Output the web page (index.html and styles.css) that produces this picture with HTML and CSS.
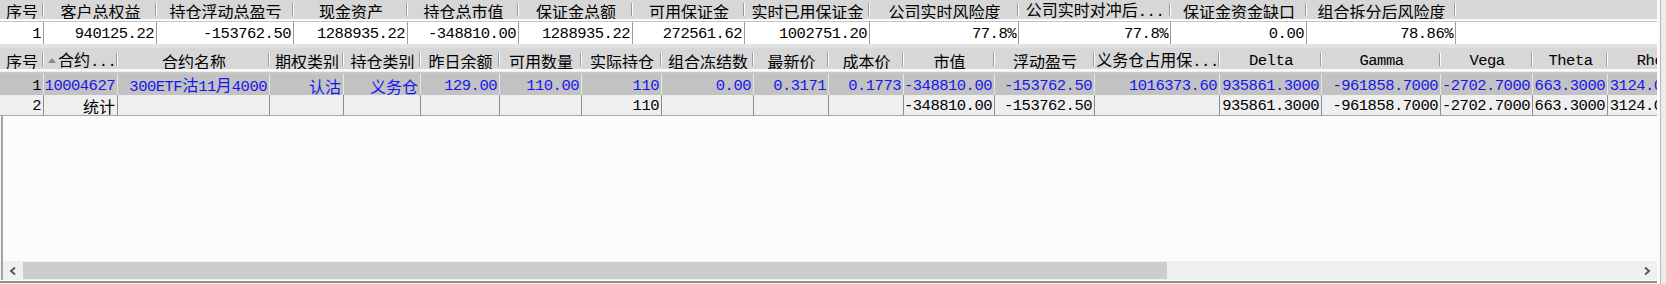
FILE: index.html
```html
<!DOCTYPE html>
<html lang="zh">
<head>
<meta charset="utf-8">
<title>持仓</title>
<link rel="stylesheet" href="styles.css">
</head>
<body>
<div class="screen">
  <div class="main">
    <div class="top-head top-cols">
      <div class="hc zh">序号</div>
      <div class="hc zh">客户总权益</div>
      <div class="hc zh">持仓浮动总盈亏</div>
      <div class="hc zh">现金资产</div>
      <div class="hc zh">持仓总市值</div>
      <div class="hc zh">保证金总额</div>
      <div class="hc zh">可用保证金</div>
      <div class="hc zh">实时已用保证金</div>
      <div class="hc zh">公司实时风险度</div>
      <div class="hc"><span><span class="zh">公司实时对冲后</span>...</span></div>
      <div class="hc zh">保证金资金缺口</div>
      <div class="hc zh">组合拆分后风险度</div>
      <div class="hfill"></div>
    </div>
    <div class="head-line"></div>
    <div class="top-row top-cols">
      <div class="dc">1</div>
      <div class="dc">940125.22</div>
      <div class="dc">-153762.50</div>
      <div class="dc">1288935.22</div>
      <div class="dc">-348810.00</div>
      <div class="dc">1288935.22</div>
      <div class="dc">272561.62</div>
      <div class="dc">1002751.20</div>
      <div class="dc">77.8%</div>
      <div class="dc">77.8%</div>
      <div class="dc">0.00</div>
      <div class="dc">78.86%</div>
      <div class="dfill"></div>
    </div>
    <div class="gap"></div>

    <div class="band low-head">
      <div class="low-cols">
        <div class="hc zh">序号</div>
        <div class="hc left"><span><svg class="sort" width="8" height="5" viewBox="0 0 8 5"><polygon points="4,0 8,5 0,5" fill="#8a8a8a"/></svg><span class="zh">合约</span>...</span></div>
        <div class="hc zh">合约名称</div>
        <div class="hc zh">期权类别</div>
        <div class="hc zh">持仓类别</div>
        <div class="hc zh">昨日余额</div>
        <div class="hc zh">可用数量</div>
        <div class="hc zh">实际持仓</div>
        <div class="hc zh">组合冻结数</div>
        <div class="hc zh">最新价</div>
        <div class="hc zh">成本价</div>
        <div class="hc zh">市值</div>
        <div class="hc zh">浮动盈亏</div>
        <div class="hc"><span><span class="zh">义务仓占用保</span>...</span></div>
        <div class="hc">Delta</div>
        <div class="hc">Gamma</div>
        <div class="hc">Vega</div>
        <div class="hc">Theta</div>
        <div class="hc">Rho</div>
      </div>
    </div>
    <div class="head-line2"></div>

    <div class="band row-sel">
      <div class="low-cols">
        <div class="dc black">1</div>
        <div class="dc">10004627</div>
        <div class="dc"><span>300ETF<span class="zh">沽</span>11<span class="zh">月</span>4000</span></div>
        <div class="dc zh">认沽</div>
        <div class="dc zh">义务仓</div>
        <div class="dc">129.00</div>
        <div class="dc">110.00</div>
        <div class="dc">110</div>
        <div class="dc">0.00</div>
        <div class="dc">0.3171</div>
        <div class="dc">0.1773</div>
        <div class="dc">-348810.00</div>
        <div class="dc">-153762.50</div>
        <div class="dc">1016373.60</div>
        <div class="dc">935861.3000</div>
        <div class="dc">-961858.7000</div>
        <div class="dc">-2702.7000</div>
        <div class="dc">663.3000</div>
        <div class="dc">3124.0000</div>
      </div>
    </div>
    <div class="band row-sum">
      <div class="low-cols">
        <div class="dc">2</div>
        <div class="dc zh">统计</div>
        <div class="dc"></div>
        <div class="dc"></div>
        <div class="dc"></div>
        <div class="dc"></div>
        <div class="dc"></div>
        <div class="dc">110</div>
        <div class="dc"></div>
        <div class="dc"></div>
        <div class="dc"></div>
        <div class="dc">-348810.00</div>
        <div class="dc">-153762.50</div>
        <div class="dc"></div>
        <div class="dc">935861.3000</div>
        <div class="dc">-961858.7000</div>
        <div class="dc">-2702.7000</div>
        <div class="dc">663.3000</div>
        <div class="dc">3124.0000</div>
      </div>
    </div>

    <div class="empty"></div>

    <div class="hscroll">
      <div class="sbtn">
        <svg width="10" height="10" viewBox="0 0 10 10"><polyline points="7,1.5 3,5 7,8.5" fill="none" stroke="#5a5a5a" stroke-width="2"/></svg>
      </div>
      <div class="thumb"></div>
      <div class="track"></div>
      <div class="sbtn">
        <svg width="10" height="10" viewBox="0 0 10 10"><polyline points="3,1.5 7,5 3,8.5" fill="none" stroke="#5a5a5a" stroke-width="2"/></svg>
      </div>
    </div>
    <div class="bottom-line"></div>
  </div>
  <div class="vstrip"></div>
</div>
</body>
</html>
```
FILE: styles.css
```css
html, body {
  margin: 0;
  padding: 0;
}

body {
  width: 1666px;
  height: 284px;
  overflow: hidden;
  background: #f0f0f0;
  color: #000;
  font-family: "Liberation Mono", "Noto Sans CJK SC", monospace;
  font-size: 15.5px;
  letter-spacing: -0.5px;
}

.zh {
  font-family: "Noto Sans CJK SC", "Liberation Sans", sans-serif;
  font-size: 16px;
  letter-spacing: 0;
}

.screen {
  display: flex;
  width: 1666px;
  height: 284px;
}

.main {
  width: 1657px;
  display: flex;
  flex-direction: column;
  overflow-x: clip;
}

.vstrip {
  width: 9px;
  background: linear-gradient(to right, #fbfbfb 0 3px, #b8b8b8 3px 4px, #ececec 4px);
}

/* ---------- column templates ---------- */
.top-cols {
  display: grid;
  grid-template-columns: 44px 113px 137px 114px 111px 114px 112px 125px 149px 152px 136px 149px 1fr;
}

.low-cols {
  display: grid;
  grid-template-columns: 44px 74px 152px 74px 77px 79px 82px 80px 92px 75px 75px 91px 100px 125px 102px 119px 92px 75px 84px;
  width: 1692px;
}

.band {
  width: 1657px;
}

/* ---------- header cells ---------- */
.top-head {
  height: 19px;
  background: #d7d7d7;
}

.low-head {
  height: 19px;
  background: #d7d7d7;
}

.low-head .low-cols {
  height: 19px;
}

.hc {
  display: flex;
  align-items: center;
  justify-content: center;
  white-space: nowrap;
  line-height: 19px;
  background:
    linear-gradient(#9a9a9a, #9a9a9a) right 1px top 3px / 1px 13px no-repeat,
    linear-gradient(#ffffff, #ffffff) right 0 top 3px / 1px 13px no-repeat;
}

.hc.left {
  justify-content: flex-start;
  padding-left: 4px;
}

.sort {
  margin-right: 2px;
  vertical-align: 3px;
}

.hfill {
  background: #d7d7d7;
}

.head-line {
  height: 3px;
  background: linear-gradient(#fafafa 0 1px, #ffffff 1px 2px, #c4c4c4 2px 3px);
}

.head-line2 {
  height: 5px;
  background: linear-gradient(#fafafa 0 2px, #eeeeee 2px 3px, #c8c8c8 3px 5px);
}

/* ---------- data cells ---------- */
.dc {
  display: flex;
  align-items: center;
  justify-content: flex-end;
  padding: 1px 2px 0 0;
  white-space: nowrap;
  box-sizing: border-box;
  line-height: 18px;
}

.top-row {
  height: 22px;
  background: #ffffff;
}

.top-row .dc {
  border-right: 1px solid #9c9c9c;
  padding-top: 2px;
}

.dfill {
  background: #ffffff;
}

.gap {
  height: 6px;
  background: linear-gradient(#e2e2e2 0 4px, #d8d8d8 4px);
}

.row-sel {
  height: 21px;
  background: #c2c2c2;
  color: #1616ee;
}

.row-sel .low-cols {
  height: 21px;
}

.row-sel .dc {
  border-right: 1px solid #e6e6e6;
  border-bottom: 1px solid #e6e6e6;
}

.row-sel .dc.black {
  color: #000;
}

.row-sum {
  height: 21px;
  background: #efefef;
}

.row-sum .low-cols {
  height: 21px;
}

.row-sum .dc {
  border-right: 1px solid #8c8c8c;
  border-bottom: 1px solid #a8a8a8;
}

/* ---------- empty area + scrollbar ---------- */
.empty {
  flex: 1;
  background: #fcfcfc;
  box-shadow: inset 1px 0 #f4f4f4, inset 3px 0 #a4a4a4;
}

.hscroll {
  height: 19px;
  display: flex;
  background: #f0f0f0;
  box-shadow: inset 1px 0 #f4f4f4, inset 3px 0 #a4a4a4;
  padding-left: 3px;
}

.sbtn {
  width: 20px;
  display: flex;
  align-items: center;
  justify-content: center;
}

.thumb {
  width: 1144px;
  margin: 1px 0;
  background: #cdcdcd;
}

.track {
  flex: 1;
}

.bottom-line {
  height: 4px;
  background: linear-gradient(#fafafa 0 1px, #8e8e8e 1px 3px, #f0f0f0 3px);
}
```
